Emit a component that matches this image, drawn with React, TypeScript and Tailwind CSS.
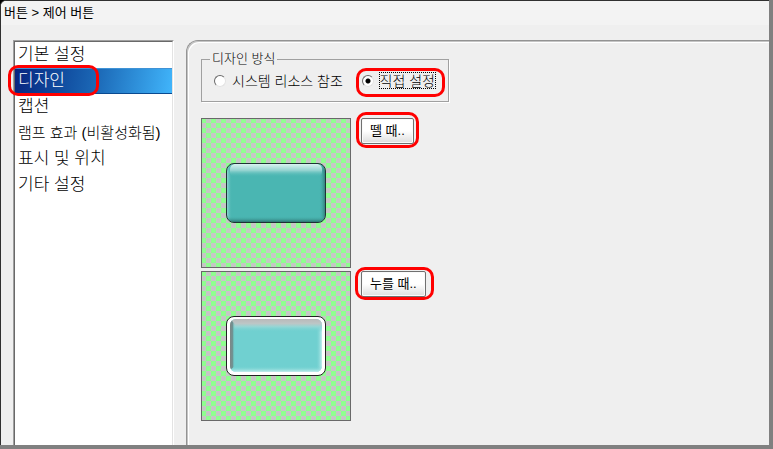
import { useState } from "react";

const menu = [
    { label: "기본 설정" },
    { label: "디자인", marked: true },
    { label: "캡션" },
    { label: "램프 효과 (비활성화됨)", small: true },
    { label: "표시 및 위치" },
    { label: "기타 설정" },
];

const checker = "bg-[repeating-conic-gradient(#c6c6c6_0_25%,#8fff8f_0_50%)] bg-size-[10px_10px] bg-origin-border";

export default function App() {
    const [page, setPage] = useState("디자인");
    const [mode, setMode] = useState("direct");

    return (
        <div className="h-screen overflow-hidden bg-[#808080] pr-1 pb-1 text-black font-['Liberation_Sans','Noto_Sans_CJK_KR',sans-serif]">
            <div className="h-full bg-black">
                <div className="flex h-full flex-col overflow-hidden rounded-tl-md border-t border-l border-[#303030] bg-[#efefef]">
                    <header className="flex h-6 shrink-0 items-center bg-[#f3f3f3] pl-[3px] text-[13px]">
                        <h1>버튼 &gt; 제어 버튼</h1>
                    </header>

                    <div className="flex min-h-0 flex-1 gap-3 pt-[15px] pl-3">
                        <nav className="w-[161px] shrink-0 border-t border-r border-l border-t-[#a0a0a0] border-r-white border-l-[#a0a0a0]">
                            <ul className="h-full border-t border-r border-l border-t-[#696969] border-r-[#e3e3e3] border-l-[#696969] bg-white">
                                {menu.map((item) => (
                                    <li key={item.label} className="relative">
                                        <button
                                            type="button"
                                            onClick={() => setPage(item.label)}
                                            className={`flex h-[26px] w-full items-center pl-[3px] text-left font-light whitespace-nowrap ${item.small ? "text-[15px]" : "text-[17px]"} ${page === item.label ? "border-t border-b border-t-[#3f93d6] border-b-[#0a4a90] bg-linear-100 from-[#0a2480] via-[#1b66b4] to-[#41b5fb] text-white" : ""}`}
                                        >
                                            {item.label}
                                        </button>
                                        {item.marked && <Mark className="-top-[3px] -left-[7px] h-[31px] w-[91px]" />}
                                    </li>
                                ))}
                            </ul>
                        </nav>

                        <main className="min-w-0 flex-1 rounded-tl-xl border-t border-l border-[#939393] pt-[10px] pl-[14px] shadow-[inset_1px_1px_0_#c4c4c4,inset_2px_2px_0_#ffffff]">
                            <fieldset className="w-[248px] border border-[#a0a0a0] px-3 pb-[7px] shadow-[1px_1px_0_#ffffff]">
                                <legend className="-ml-1 px-0.5 text-[13px] leading-4 font-light">디자인 방식</legend>
                                <div className="flex h-[27px] items-center justify-between">
                                    <Radio label="시스템 리소스 참조" checked={mode === "system"} onChange={() => setMode("system")} />
                                    <div className="relative">
                                        <Radio label="직접 설정" focused checked={mode === "direct"} onChange={() => setMode("direct")} />
                                        <Mark className="-top-1 -right-[9px] h-[29px] w-[89px]" />
                                    </div>
                                </div>
                            </fieldset>

                            <div className="mt-4 flex flex-col gap-[3px]">
                                <div className="flex items-start gap-[10px]">
                                    <div className={`flex size-[150px] items-center justify-center border border-[#696969] ${checker}`}>
                                        <RaisedKey />
                                    </div>
                                    <PushButton label="뗄 때.." mark="-top-[6px] -right-[5px] -left-[5px] h-9" />
                                </div>
                                <div className="flex items-start gap-[10px]">
                                    <div className={`flex size-[150px] items-center justify-center border border-[#696969] ${checker}`}>
                                        <PressedKey />
                                    </div>
                                    <PushButton label="누를 때.." mark="-top-1 -right-2 -left-[6px] h-[33px]" />
                                </div>
                            </div>
                        </main>
                    </div>
                </div>
            </div>
        </div>
    );
}

// red callout ring laid over a control
const Mark = ({ className }: { className: string }) => (
    <span className={`pointer-events-none absolute z-10 rounded-[10px] border-3 border-[#ff0000] ${className}`} />
);

type RadioProps = { label: string; checked: boolean; focused?: boolean; onChange: () => void };

const Radio = ({ label, checked, focused, onChange }: RadioProps) => (
    <label className="flex items-center gap-[5px] text-sm font-light whitespace-nowrap">
        <input
            type="radio"
            name="design-mode"
            checked={checked}
            onChange={onChange}
            className="size-3 appearance-none rounded-full border border-t-[#696969] border-r-[#e3e3e3] border-b-[#e3e3e3] border-l-[#696969] bg-white checked:bg-[radial-gradient(circle,#000_2px,#fff_3px)]"
        />
        <span className={`flex h-[17px] items-center border border-dotted ${focused ? "border-black" : "border-transparent"}`}>{label}</span>
    </label>
);

const PushButton = ({ label, mark }: { label: string; mark: string }) => (
    <div className="relative">
        <button
            type="button"
            className="flex h-[26px] items-center rounded-xs border border-[#707070] bg-linear-to-b from-white from-50% to-[#dddddd] px-2 text-[13px] whitespace-nowrap shadow-[inset_0_0_0_1px_#fafafa]"
        >
            {label}
        </button>
        <Mark className={mark} />
    </div>
);

const RaisedKey = () => (
    <svg width="100" height="60" viewBox="0 0 100 60">
        <defs>
            <linearGradient id="upTop" x1="0" y1="0" x2="0" y2="1">
                <stop offset="0" stopColor="#d8f2f0" />
                <stop offset="0.5" stopColor="#93d3d0" />
                <stop offset="1" stopColor="#4ab6b2" stopOpacity="0" />
            </linearGradient>
            <linearGradient id="upLeft" x1="0" y1="0" x2="1" y2="0">
                <stop offset="0" stopColor="#8dd3d0" />
                <stop offset="1" stopColor="#4ab6b2" stopOpacity="0" />
            </linearGradient>
            <linearGradient id="upRight" x1="1" y1="0" x2="0" y2="0">
                <stop offset="0" stopColor="#347f7c" />
                <stop offset="1" stopColor="#4ab6b2" stopOpacity="0" />
            </linearGradient>
            <linearGradient id="upBottom" x1="0" y1="1" x2="0" y2="0">
                <stop offset="0" stopColor="#2c7370" />
                <stop offset="1" stopColor="#4ab6b2" stopOpacity="0" />
            </linearGradient>
            <clipPath id="upClip">
                <rect x="1" y="1" width="98" height="58" rx="7" />
            </clipPath>
        </defs>
        <g clipPath="url(#upClip)">
            <rect width="100" height="60" fill="#4ab6b2" />
            <rect x="1" y="1" width="5" height="58" fill="url(#upLeft)" />
            <rect x="93" y="1" width="6" height="58" fill="url(#upRight)" />
            <rect x="1" y="53" width="98" height="6" fill="url(#upBottom)" />
            <rect x="4" y="1" width="92" height="13" rx="5" fill="url(#upTop)" />
        </g>
        <rect x="0.5" y="0.5" width="99" height="59" rx="7.5" fill="none" stroke="#1d3433" />
    </svg>
);

const PressedKey = () => (
    <svg width="100" height="60" viewBox="0 0 100 60">
        <defs>
            <linearGradient id="downTop" x1="0" y1="0" x2="0" y2="1">
                <stop offset="0" stopColor="#b9b9b9" />
                <stop offset="0.35" stopColor="#bcc6c6" />
                <stop offset="0.6" stopColor="#93d6d5" />
                <stop offset="1" stopColor="#70d0d0" stopOpacity="0" />
            </linearGradient>
            <linearGradient id="downLeft" x1="0" y1="0" x2="1" y2="0">
                <stop offset="0" stopColor="#808686" />
                <stop offset="0.5" stopColor="#6f9292" />
                <stop offset="1" stopColor="#70d0d0" stopOpacity="0" />
            </linearGradient>
            <linearGradient id="downRight" x1="1" y1="0" x2="0" y2="0">
                <stop offset="0" stopColor="#c4eeed" />
                <stop offset="1" stopColor="#70d0d0" stopOpacity="0" />
            </linearGradient>
            <linearGradient id="downBottom" x1="0" y1="1" x2="0" y2="0">
                <stop offset="0" stopColor="#c4eeed" />
                <stop offset="1" stopColor="#70d0d0" stopOpacity="0" />
            </linearGradient>
            <clipPath id="downClip">
                <rect x="4" y="3" width="92" height="53" rx="6" />
            </clipPath>
        </defs>
        <rect x="0.5" y="0.5" width="99" height="59" rx="7.5" fill="#ffffff" stroke="#222222" />
        <g clipPath="url(#downClip)">
            <rect width="100" height="60" fill="#70d0d0" />
            <rect x="90" y="3" width="6" height="53" fill="url(#downRight)" />
            <rect x="4" y="50" width="92" height="6" fill="url(#downBottom)" />
            <rect x="4" y="3" width="92" height="13" fill="url(#downTop)" />
            <path d="M4 3l5 5v42l-5 4z" fill="url(#downLeft)" />
        </g>
    </svg>
);
